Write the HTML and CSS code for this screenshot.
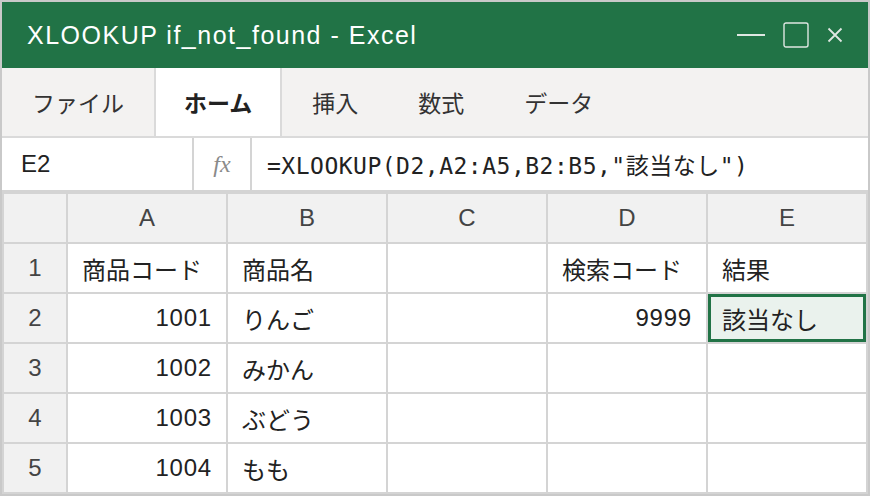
FILE: index.html
```html
<!DOCTYPE html>
<html lang="ja">
<head>
    <meta charset="UTF-8">
    <meta name="viewport" content="width=device-width, initial-scale=1.0">
    <title>XLOOKUP if_not_found - Excel</title>
    <link rel="stylesheet" href="styles.css">
</head>
<body>

<div class="window">
    <header class="titlebar">
        <h1 class="title">XLOOKUP if_not_found - Excel</h1>
        <div class="controls">
            <svg class="ctl-min" width="30" height="4" viewBox="0 0 30 4"><line x1="1" y1="2" x2="29" y2="2" stroke="#dfe7e2" stroke-width="2"/></svg>
            <svg class="ctl-max" width="26" height="26" viewBox="0 0 26 26"><rect x="1" y="1" width="24" height="24" rx="2" fill="none" stroke="#dfe7e2" stroke-width="1.4"/></svg>
            <svg class="ctl-close" width="16" height="16" viewBox="0 0 16 16"><path d="M1.5 1.5 L14.5 14.5 M14.5 1.5 L1.5 14.5" stroke="#dfe7e2" stroke-width="1.8"/></svg>
        </div>
    </header>

    <nav class="tabs">
        <a class="tab">ファイル</a>
        <a class="tab active">ホーム</a>
        <a class="tab">挿入</a>
        <a class="tab">数式</a>
        <a class="tab">データ</a>
    </nav>

    <div class="formula-bar">
        <div class="name-box">E2</div>
        <div class="fx">fx</div>
        <div class="formula">=XLOOKUP(D2,A2:A5,B2:B5,"該当なし")</div>
    </div>

    <div class="sheet">
        <div class="cell head"></div>
        <div class="cell head col">A</div>
        <div class="cell head col">B</div>
        <div class="cell head col">C</div>
        <div class="cell head col">D</div>
        <div class="cell head col">E</div>

        <div class="cell head row">1</div>
        <div class="cell">商品コード</div>
        <div class="cell">商品名</div>
        <div class="cell"></div>
        <div class="cell">検索コード</div>
        <div class="cell">結果</div>

        <div class="cell head row">2</div>
        <div class="cell num">1001</div>
        <div class="cell">りんご</div>
        <div class="cell"></div>
        <div class="cell num">9999</div>
        <div class="cell selected">該当なし</div>

        <div class="cell head row">3</div>
        <div class="cell num">1002</div>
        <div class="cell">みかん</div>
        <div class="cell"></div>
        <div class="cell"></div>
        <div class="cell"></div>

        <div class="cell head row">4</div>
        <div class="cell num">1003</div>
        <div class="cell">ぶどう</div>
        <div class="cell"></div>
        <div class="cell"></div>
        <div class="cell"></div>

        <div class="cell head row">5</div>
        <div class="cell num">1004</div>
        <div class="cell">もも</div>
        <div class="cell"></div>
        <div class="cell"></div>
        <div class="cell"></div>
    </div>
</div>

</body>
</html>
```

FILE: styles.css
```css
body {
    margin: 0;
    font-family: "Liberation Sans", "Noto Sans CJK JP", sans-serif;
    color: #222;
    background-color: #fff;
}
.window {
    width: 870px;
    height: 496px;
    box-sizing: border-box;
    border: 2px solid #c9c9c9;
    display: flex;
    flex-direction: column;
}
.titlebar {
    height: 66px;
    background-color: #217346;
    display: flex;
    align-items: center;
    justify-content: space-between;
    padding: 0 25px;
}
.title {
    margin: 0;
    color: #fff;
    font-size: 25px;
    font-weight: normal;
    letter-spacing: 1.5px;
}
.controls {
    display: flex;
    align-items: center;
}
.ctl-min {
    margin-right: 17px;
}
.ctl-max {
    margin-right: 18px;
}
.tabs {
    height: 68px;
    display: flex;
    background-color: #f3f2f1;
    border-bottom: 2px solid #dadada;
}
.tab {
    display: flex;
    align-items: center;
    padding: 0 30px;
    font-size: 23px;
    color: #333;
}
.tab.active {
    background-color: #fff;
    border-left: 2px solid #dadada;
    border-right: 2px solid #dadada;
    padding: 0 28px;
    font-weight: bold;
    color: #222;
}
.formula-bar {
    height: 52px;
    display: flex;
    background-color: #fff;
    border-bottom: 2px solid #d4d4d4;
}
.name-box {
    width: 192px;
    box-sizing: border-box;
    padding-left: 19px;
    display: flex;
    align-items: center;
    font-size: 24px;
    border-right: 2px solid #d4d4d4;
}
.fx {
    width: 56px;
    display: flex;
    align-items: center;
    justify-content: center;
    font-family: "Liberation Serif", serif;
    font-style: italic;
    font-size: 24px;
    color: #8a8a8a;
    border-right: 2px solid #d4d4d4;
}
.formula {
    display: flex;
    align-items: center;
    padding-left: 15px;
    font-family: "DejaVu Sans Mono", "Noto Sans CJK JP", monospace;
    font-size: 23px;
    letter-spacing: 0.5px;
    color: #222;
}
.sheet {
    display: grid;
    grid-template-columns: 62px repeat(5, 158px);
    grid-template-rows: repeat(6, 48px);
    gap: 2px;
    padding: 2px;
    background-color: #d4d4d4;
}
.cell {
    background-color: #fff;
    display: flex;
    align-items: center;
    padding: 0 14px;
    font-size: 24px;
    color: #222;
    min-width: 0;
}
.cell.head {
    background-color: #f1f1f1;
    color: #444;
    justify-content: center;
    padding: 0;
}
.cell.num {
    justify-content: flex-end;
    letter-spacing: 0.8px;
}
.cell.selected {
    background-color: #eaf2ed;
    box-shadow: inset 0 0 0 3px #217346;
}
```
